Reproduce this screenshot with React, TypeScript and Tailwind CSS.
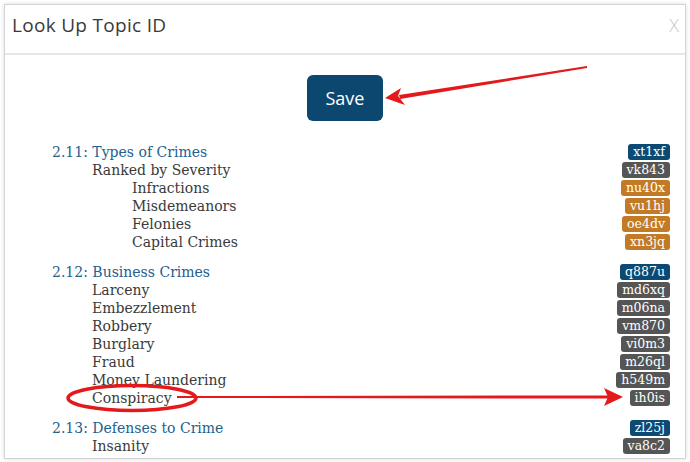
import React from 'react';

type Tone = 'blue' | 'gray' | 'orange';

interface Row {
  label: string;
  code: string;
  level: 0 | 1 | 2;
  tone: Tone;
}

const sections: Row[][] = [
  [
    { label: '2.11: Types of Crimes', code: 'xt1xf', level: 0, tone: 'blue' },
    { label: 'Ranked by Severity', code: 'vk843', level: 1, tone: 'gray' },
    { label: 'Infractions', code: 'nu40x', level: 2, tone: 'orange' },
    { label: 'Misdemeanors', code: 'vu1hj', level: 2, tone: 'orange' },
    { label: 'Felonies', code: 'oe4dv', level: 2, tone: 'orange' },
    { label: 'Capital Crimes', code: 'xn3jq', level: 2, tone: 'orange' },
  ],
  [
    { label: '2.12: Business Crimes', code: 'q887u', level: 0, tone: 'blue' },
    { label: 'Larceny', code: 'md6xq', level: 1, tone: 'gray' },
    { label: 'Embezzlement', code: 'm06na', level: 1, tone: 'gray' },
    { label: 'Robbery', code: 'vm870', level: 1, tone: 'gray' },
    { label: 'Burglary', code: 'vi0m3', level: 1, tone: 'gray' },
    { label: 'Fraud', code: 'm26ql', level: 1, tone: 'gray' },
    { label: 'Money Laundering', code: 'h549m', level: 1, tone: 'gray' },
    { label: 'Conspiracy', code: 'ih0is', level: 1, tone: 'gray' },
  ],
  [
    { label: '2.13: Defenses to Crime', code: 'zl25j', level: 0, tone: 'blue' },
    { label: 'Insanity', code: 'va8c2', level: 1, tone: 'gray' },
  ],
];

const toneClass: Record<Tone, string> = {
  blue: 'bg-[#0d4a73]',
  gray: 'bg-[#555555]',
  orange: 'bg-[#c27a25]',
};

const levelClass = ['pl-0 text-[#22608f]', 'pl-[40px] text-[#3a3a3a]', 'pl-[80px] text-[#3a3a3a]'];

const serif = { fontFamily: '"DejaVu Serif", "Liberation Serif", serif' };

export default function App() {
  return (
    <div className="relative w-[690px] h-[462px] bg-white overflow-hidden">
      <div className="m-[4px] h-[455px] border border-[#d4d4d4] shadow-[0_0_4px_rgba(0,0,0,0.15)] overflow-hidden bg-white">
        <div
          className="h-[50px] border-b-2 border-[#e6e6e6] flex items-start justify-between pt-[7px] pl-[7px] pr-[6px]"
          style={{ fontFamily: '"Open Sans", Lato, sans-serif' }}
        >
          <h1 className="text-[19px] leading-[26px] text-[#3a3a3a] tracking-[0.3px]">Look Up Topic ID</h1>
          <span className="text-[18px] leading-[26px] font-light text-[#c8c8c8]">X</span>
        </div>

        <div className="pt-[20px] flex justify-center">
          <button
            className="w-[76px] h-[46px] rounded-[6px] bg-[#0c4770] text-white text-[18px]"
            style={{ fontFamily: '"Open Sans", Lato, sans-serif' }}
          >
            Save
          </button>
        </div>

        <div className="pt-[22px] pl-[47px] pr-[15px]" style={serif}>
          {sections.map((rows, i) => (
            <div key={i} className={i > 0 ? 'mt-[12px]' : ''}>
              {rows.map((row) => (
                <div key={row.code} className="h-[18px] flex items-center justify-between">
                  <span className={`text-[14px] leading-[18px] ${levelClass[row.level]}`}>{row.label}</span>
                  <span
                    className={`h-[16px] px-[5px] rounded-[3px] text-[12.5px] leading-[16px] text-white ${toneClass[row.tone]}`}
                  >
                    {row.code}
                  </span>
                </div>
              ))}
            </div>
          ))}
        </div>
      </div>

      {/* annotation overlay */}
      <svg className="absolute inset-0 pointer-events-none" width="690" height="462" viewBox="0 0 690 462">
        <polygon points="587,66 587,68 400,99 399,95" fill="#e3191c" />
        <polygon points="385,98 401,88 398,96 405,105" fill="#e3191c" />
        <ellipse cx="132" cy="398" rx="64" ry="12.5" fill="none" stroke="#e3191c" strokeWidth="3.5" />
        <polygon points="177,396 608,395.5 608,398.5 177,398" fill="#e3191c" />
        <polygon points="623,397 604,388 608,397 604,406" fill="#e3191c" />
      </svg>
    </div>
  );
}
